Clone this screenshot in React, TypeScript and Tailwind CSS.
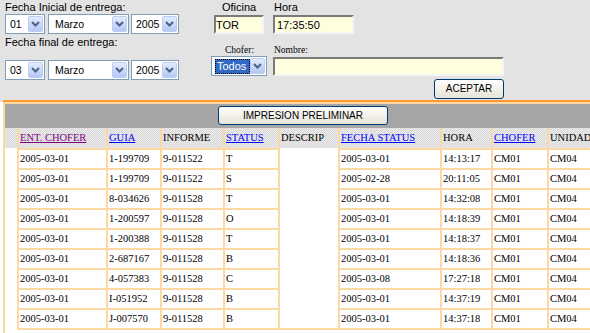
import React from "react";

const rows: string[][] = [
  ["2005-03-01", "1-199709", "9-011522", "T", "", "2005-03-01", "14:13:17", "CM01", "CM04"],
  ["2005-03-01", "1-199709", "9-011522", "S", "", "2005-02-28", "20:11:05", "CM01", "CM04"],
  ["2005-03-01", "8-034626", "9-011528", "T", "", "2005-03-01", "14:32:08", "CM01", "CM04"],
  ["2005-03-01", "1-200597", "9-011528", "O", "", "2005-03-01", "14:18:39", "CM01", "CM04"],
  ["2005-03-01", "1-200388", "9-011528", "T", "", "2005-03-01", "14:18:37", "CM01", "CM04"],
  ["2005-03-01", "2-687167", "9-011528", "B", "", "2005-03-01", "14:18:36", "CM01", "CM04"],
  ["2005-03-01", "4-057383", "9-011528", "C", "", "2005-03-08", "17:27:18", "CM01", "CM04"],
  ["2005-03-01", "I-051952", "9-011528", "B", "", "2005-03-01", "14:37:19", "CM01", "CM04"],
  ["2005-03-01", "J-007570", "9-011528", "B", "", "2005-03-01", "14:37:18", "CM01", "CM04"],
];

const widths = [
  "w-[89px]",
  "w-[54px]",
  "w-[63px]",
  "w-[55px]",
  "w-[60px]",
  "w-[102px]",
  "w-[51px]",
  "w-[56px]",
  "w-[60px]",
];

const headers: { t: string; c: string }[] = [
  { t: "ENT. CHOFER", c: "text-[#800080] underline" },
  { t: "GUIA", c: "text-[#0000ff] underline" },
  { t: "INFORME", c: "text-black" },
  { t: "STATUS", c: "text-[#0000ff] underline" },
  { t: "DESCRIP", c: "text-black" },
  { t: "FECHA STATUS", c: "text-[#0000ff] underline" },
  { t: "HORA", c: "text-black" },
  { t: "CHOFER", c: "text-[#0000ff] underline" },
  { t: "UNIDAD", c: "text-black" },
];

function Arrow() {
  return (
    <div className="mr-[1px] flex h-[16px] w-[15px] shrink-0 items-center justify-center rounded-[2px] border border-[#bccdf5] bg-gradient-to-b from-[#e3ebfe] to-[#b4c8f6]">
      <svg width="9" height="6" viewBox="0 0 9 6">
        <path d="M1 1 L4.5 4.5 L8 1" stroke="#4d6185" strokeWidth="2" fill="none" />
      </svg>
    </div>
  );
}

function Sel({ w, text, pl }: { w: string; text: string; pl: string }) {
  return (
    <div className={`flex h-[20px] items-center border border-[#7f9db9] bg-white ${w}`}>
      <span className={`flex-1 text-[10.5px] leading-[12px] text-black ${pl}`}>{text}</span>
      <Arrow />
    </div>
  );
}

function Btn({ w, text }: { w: string; text: string }) {
  return (
    <div
      className={`flex h-[19px] items-center justify-center rounded-[3px] border border-[#003c74] bg-gradient-to-b from-white to-[#e6e3d6] text-[10px] leading-[12px] text-black ${w}`}
    >
      {text}
    </div>
  );
}

const inputCls =
  "flex items-center border-2 border-t-[#7a7a7a] border-l-[#7a7a7a] border-b-[#f4f4f4] border-r-[#f4f4f4] bg-[#ffffe0] text-[11px] leading-[12px] text-black";

export default function App() {
  return (
    <div className="h-[333px] w-[590px] overflow-hidden bg-white font-['Liberation_Sans',Arial,sans-serif]">
      {/* top form */}
      <div className="flex h-[100px] bg-[#e3e3e3]">
        <div className="w-[211px] pl-[5px] pt-[2px]">
          <div className="h-[12px] text-[11px] leading-[11px] text-black">Fecha Inicial de entrega:</div>
          <div className="flex">
            <Sel w="w-[40px]" text="01" pl="pl-[4px]" />
            <div className="ml-[3px]">
              <Sel w="w-[81px]" text="Marzo" pl="pl-[6px]" />
            </div>
            <div className="ml-[2px]">
              <Sel w="w-[48px]" text="2005" pl="pl-[4px]" />
            </div>
          </div>
          <div className="mt-[3px] h-[11px] text-[11px] leading-[11px] text-black">Fecha final de entrega:</div>
          <div className="mt-[12px] flex">
            <Sel w="w-[40px]" text="03" pl="pl-[4px]" />
            <div className="ml-[3px]">
              <Sel w="w-[81px]" text="Marzo" pl="pl-[6px]" />
            </div>
            <div className="ml-[2px]">
              <Sel w="w-[48px]" text="2005" pl="pl-[4px]" />
            </div>
          </div>
        </div>

        <div className="pt-[2px]">
          <div className="flex h-[12px] text-[11px] leading-[11px] text-black">
            <div className="w-[62px] pl-[11px]">Oficina</div>
            <div className="pl-[1px]">Hora</div>
          </div>
          <div className="mt-[1px] flex">
            <div className={`ml-[3px] h-[19px] w-[50px] pl-[0px] ${inputCls}`}>TOR</div>
            <div className={`ml-[9px] h-[19px] w-[81px] pl-[2px] ${inputCls}`}>17:35:50</div>
          </div>
          <div className="mt-[11px] flex h-[11px] font-['Liberation_Serif','Times_New_Roman',serif] text-[9.5px] leading-[11px] text-black">
            <div className="w-[62px] pl-[14px]">Chofer:</div>
            <div className="pl-[1px]">Nombre:</div>
          </div>
          <div className="flex">
            <div className="flex h-[20px] w-[56px] items-center border border-[#7f9db9] bg-white">
              <div className="ml-[3px] flex h-[15px] w-[36px] items-center border border-dotted border-black bg-[#316ac5] pl-[1px] text-[11px] leading-[12px] text-white">
                Todos
              </div>
              <div className="ml-auto">
                <Arrow />
              </div>
            </div>
            <div className={`ml-[6px] mt-[1px] h-[19px] w-[231px] ${inputCls}`}></div>
          </div>
          <div className="ml-[223px] mt-[3px]">
            <div className="flex h-[20px] w-[70px] items-center justify-center rounded-[3px] border border-[#003c74] bg-gradient-to-b from-white to-[#e6e3d6] text-[10px] leading-[12px] text-black">
              ACEPTAR
            </div>
          </div>
        </div>
      </div>

      {/* orange line */}
      <div className="flex h-[2px]">
        <div className="w-[3px] bg-[#e3e3e3]"></div>
        <div className="flex-1 bg-[#ff9933]"></div>
      </div>

      {/* table */}
      <div className="ml-[3px] h-[231px] overflow-hidden border-l-2 border-t-2 border-[#fcd8a3]">
        <div className="flex h-[24px] bg-[#a6a6a6] pt-[2px]">
          <div className="ml-[213px]">
            <Btn w="w-[170px]" text="IMPRESION PRELIMINAR" />
          </div>
        </div>

        <div className="w-[620px] font-['Liberation_Serif','Times_New_Roman',serif] text-[10.5px] leading-[12px] text-black">
          <div className="flex h-[20px]">
            <div className="w-[12px] shrink-0 bg-[image:repeating-conic-gradient(#ebebeb_0_25%,#d8d8d8_0_50%)] bg-[length:2px_2px]"></div>
            {headers.map((h, i) => (
              <div
                key={i}
                className={`flex shrink-0 items-center border-l-2 border-[#fcd8a3] bg-[image:repeating-conic-gradient(#ebebeb_0_25%,#d8d8d8_0_50%)] bg-[length:2px_2px] pl-[1px] ${widths[i]}`}
              >
                <span className={h.c}>{h.t}</span>
              </div>
            ))}
          </div>
          {rows.map((r, ri) => (
            <div key={ri} className="flex h-[20px]">
              <div className="w-[12px] shrink-0 bg-white"></div>
              {r.map((v, ci) =>
                ci === 4 ? (
                  <div key={ci} className={`shrink-0 border-l-2 border-[#fcd8a3] bg-white ${widths[ci]}`}></div>
                ) : (
                  <div
                    key={ci}
                    className={`flex shrink-0 items-center border-l-2 border-t-2 border-[#fcd8a3] bg-white pl-[1px] ${widths[ci]}`}
                  >
                    {v}
                  </div>
                )
              )}
            </div>
          ))}
          <div className="ml-[12px] h-[2px] bg-[#fcd8a3]"></div>
        </div>
      </div>
    </div>
  );
}
